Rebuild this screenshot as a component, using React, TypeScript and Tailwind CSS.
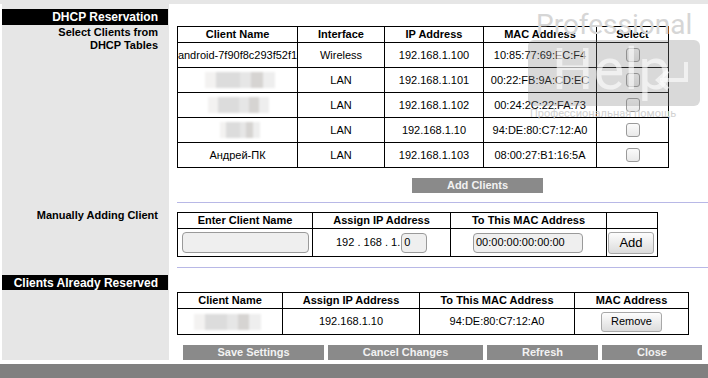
import type { ReactNode } from 'react'

const font = { fontFamily: '"Liberation Sans", Arial, sans-serif' }

const clients = [
  { name: 'android-7f90f8c293f52f1', iface: 'Wireless', ip: '192.168.1.100', mac: '10:85:77:69:EC:F4' },
  { name: '', blur: 'w-[70px] ml-[4px]', iface: 'LAN', ip: '192.168.1.101', mac: '00:22:FB:9A:CD:EC' },
  { name: '', blur: 'w-[62px] ml-[2px]', iface: 'LAN', ip: '192.168.1.102', mac: '00:24:2C:22:FA:73' },
  { name: '', blur: 'w-[40px] ml-[4px]', iface: 'LAN', ip: '192.168.1.10', mac: '94:DE:80:C7:12:A0' },
  { name: 'Андрей-ПК', iface: 'LAN', ip: '192.168.1.103', mac: '08:00:27:B1:16:5A' },
]

function Cell({ children, bold }: { children?: ReactNode; bold?: boolean }) {
  return (
    <div
      className={
        'flex items-center justify-center bg-white text-[11px] text-black whitespace-nowrap overflow-hidden ' +
        (bold ? 'font-bold' : '')
      }
    >
      {children}
    </div>
  )
}

function Blurred({ className }: { className?: string }) {
  return (
    <div className={'h-[16px] flex blur-[1px] ' + (className ?? '')}>
      <div className="flex-1 bg-[#f3f2f1]" />
      <div className="flex-[2] bg-[#dcdcdc]" />
      <div className="flex-1 bg-[#e6e6e6]" />
      <div className="flex-1 bg-[#d6d4d2]" />
      <div className="flex-1 bg-[#eeeeee]" />
    </div>
  )
}

function Checkbox() {
  return <div className="h-[14px] w-[14px] rounded-[3px] border border-[#9a9a9a] bg-gradient-to-b from-[#fbfbfb] to-[#e9e9e9]" />
}

function GreyButton({ label, className }: { label: string; className?: string }) {
  return (
    <div
      className={
        'flex h-[15px] items-center justify-center bg-[#8a8a8a] text-[11px] font-bold text-[#f2f2f2] ' + (className ?? '')
      }
    >
      {label}
    </div>
  )
}

function SectionBar({ label, className }: { label: string; className?: string }) {
  return (
    <div
      className={
        'flex w-[166px] items-center justify-end whitespace-nowrap bg-black pr-[10px] text-[12px] font-bold text-white ' +
        (className ?? '')
      }
    >
      {label}
    </div>
  )
}

function Watermark() {
  return (
    <div className="pointer-events-none absolute left-[526px] top-[10px] w-[180px]">
      <div
        className="ml-[10px] text-[28px] leading-[30px] text-[#d6d6d6]"
        style={{ fontFamily: 'Roboto, "Open Sans", sans-serif' }}
      >
        Professional
      </div>
      <div className="relative ml-[2px] h-[66px] w-[172px] rounded-[6px] bg-[#808080]/30">
        <div
          className="absolute left-[24px] top-[-3px] text-[58px] leading-[64px] text-white/60"
          style={{ fontFamily: 'Roboto, "Open Sans", sans-serif' }}
        >
          Help
        </div>
        <svg className="absolute left-[124px] top-[20px]" width="40" height="32" viewBox="0 0 40 32" fill="none">
          <path d="M34 2 V20 H8" stroke="rgba(255,255,255,0.6)" strokeWidth="4" />
          <path d="M16 11 L6 20 L16 29" stroke="rgba(255,255,255,0.6)" strokeWidth="4" />
        </svg>
      </div>
      <div
        className="ml-[4px] mt-[2px] text-[11px] leading-[12px] text-[#d2d2d2]"
        style={{ fontFamily: 'Roboto, sans-serif' }}
      >
        Профессиональная помощь
      </div>
    </div>
  )
}

export default function App() {
  return (
    <div className="relative h-[378px] w-[708px] overflow-hidden bg-white" style={font}>
      <div className="h-[4px] bg-[#e6e6e6]" />
      <div className="flex h-[356px]">
        {/* left label column */}
        <div className="ml-[2px] w-[167px] bg-[#e6e6e6] pt-[5px]">
          <SectionBar label="DHCP Reservation" className="h-[16px]" />
          <div className="pr-[11px] pt-[1px] text-right text-[11px] font-bold leading-[13px] text-black">
            Select Clients from
            <br />
            DHCP Tables
          </div>
          <div className="mt-[157px] pr-[11px] text-right text-[11px] font-bold leading-[13px] text-black">
            Manually Adding Client
          </div>
          <SectionBar label="Clients Already Reserved" className="mt-[53px] h-[15px]" />
        </div>

        {/* right content column */}
        <div className="flex-1">
          <div className="ml-[8px] mt-[22px] grid w-[492px] grid-cols-[119px_86px_98px_112px_71px] grid-rows-[15px_repeat(5,24px)] gap-px bg-black p-px">
            <Cell bold>Client Name</Cell>
            <Cell bold>Interface</Cell>
            <Cell bold>IP Address</Cell>
            <Cell bold>MAC Address</Cell>
            <Cell bold>Select</Cell>
            {clients.map((c) => (
              <div key={c.mac} className="contents">
                <Cell>{c.name ? c.name : <Blurred className={c.blur} />}</Cell>
                <Cell>{c.iface}</Cell>
                <Cell>{c.ip}</Cell>
                <Cell>{c.mac}</Cell>
                <Cell>
                  <Checkbox />
                </Cell>
              </div>
            ))}
          </div>

          <GreyButton label="Add Clients" className="ml-[243px] mt-[10px] w-[131px]" />

          <div className="ml-[8px] mt-[9px] h-px bg-[#b8b8e6]" />

          <div className="ml-[8px] mt-[9px] grid w-[481px] grid-cols-[134px_137px_155px_50px] grid-rows-[15px_27px] gap-px bg-black p-px">
            <Cell bold>Enter Client Name</Cell>
            <Cell bold>Assign IP Address</Cell>
            <Cell bold>To This MAC Address</Cell>
            <Cell />
            <div className="flex items-center bg-white pl-[4px]">
              <div className="h-[21px] w-[127px] rounded-[4px] border border-[#9a9a9a] bg-[#efefef]" />
            </div>
            <div className="flex items-center bg-white pl-[23px] text-[11px] text-black">
              <span>192 . 168 . 1.</span>
              <div className="ml-px flex h-[20px] w-[26px] items-center rounded-[4px] border border-[#9a9a9a] bg-[#efefef] pl-[2px]">
                0
              </div>
            </div>
            <div className="flex items-center bg-white pl-[22px]">
              <div className="flex h-[20px] w-[110px] items-center rounded-[4px] border border-[#9a9a9a] bg-[#efefef] pl-[2px] text-[11px] text-black">
                00:00:00:00:00:00
              </div>
            </div>
            <div className="flex items-center bg-white pl-[1px]">
              <div className="flex h-[22px] w-[46px] items-center justify-center rounded-[3px] border border-[#a8a8a8] bg-gradient-to-b from-[#fdfdfd] to-[#dcdcdc] text-[13px] text-black">
                Add
              </div>
            </div>
          </div>

          <div className="ml-[8px] mt-[10px] h-px bg-[#b8b8e6]" />

          <div className="ml-[8px] mt-[24px] grid w-[512px] grid-cols-[104px_136px_154px_113px] grid-rows-[15px_25px] gap-px bg-black p-px">
            <Cell bold>Client Name</Cell>
            <Cell bold>Assign IP Address</Cell>
            <Cell bold>To This MAC Address</Cell>
            <Cell bold>MAC Address</Cell>
            <Cell>
              <Blurred className="w-[67px] ml-[-6px]" />
            </Cell>
            <Cell>192.168.1.10</Cell>
            <Cell>94:DE:80:C7:12:A0</Cell>
            <Cell>
              <div className="flex h-[20px] w-[61px] items-center justify-center rounded-[3px] border border-[#a8a8a8] bg-gradient-to-b from-[#fdfdfd] to-[#dcdcdc] text-[11px] text-black">
                Remove
              </div>
            </Cell>
          </div>

          <div className="ml-[14px] mt-[10px] flex gap-[4px]">
            <GreyButton label="Save Settings" className="w-[141px]" />
            <GreyButton label="Cancel Changes" className="w-[155px]" />
            <GreyButton label="Refresh" className="w-[111px]" />
            <GreyButton label="Close" className="w-[100px]" />
          </div>
        </div>
      </div>
      <div className="h-[4px]" />
      <div className="h-[14px] bg-[#808080]" />
      <Watermark />
    </div>
  )
}
